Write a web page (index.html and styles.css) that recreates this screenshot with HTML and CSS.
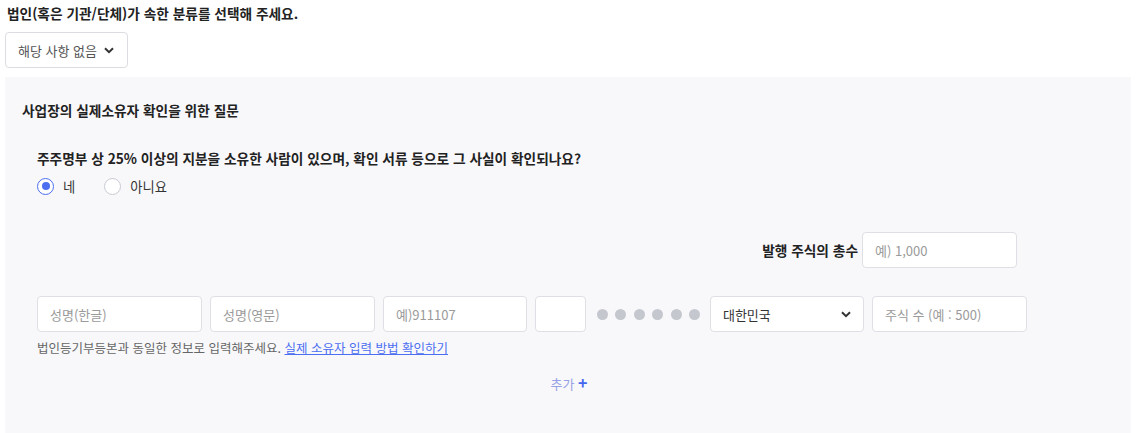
FILE: index.html
```html
<!DOCTYPE html>
<html lang="ko">
<head>
<meta charset="utf-8">
<link rel="stylesheet" href="styles.css">
</head>
<body>
<div class="page">
  <div class="page-title">법인(혹은 기관/단체)가 속한 분류를 선택해 주세요.</div>
  <button class="dropdown">해당 사항 없음
    <svg class="chev" width="10" height="7" viewBox="0 0 10 7"><path d="M1 1.2 L5 5.2 L9 1.2" fill="none" stroke="#333" stroke-width="2"/></svg>
  </button>
  <section class="panel">
    <div class="section-title">사업장의 실제소유자 확인을 위한 질문</div>
    <div class="question-block">
      <div class="question">주주명부 상 25% 이상의 지분을 소유한 사람이 있으며, 확인 서류 등으로 그 사실이 확인되나요?</div>
      <div class="radios">
        <label class="radio"><span class="circle checked"></span>네</label>
        <label class="radio"><span class="circle"></span>아니요</label>
      </div>
      <div class="total-row">
        <span class="total-label">발행 주식의 총수</span>
        <div class="field w-total"><span class="ph">예) 1,000</span></div>
      </div>
      <div class="owner-row">
        <div class="field w-name"><span class="ph">성명(한글)</span></div>
        <div class="field w-name"><span class="ph">성명(영문)</span></div>
        <div class="field w-birth"><span class="ph">예)911107</span></div>
        <div class="field w-digit"></div>
        <div class="dots"><i></i><i></i><i></i><i></i><i></i><i></i></div>
        <div class="field w-country"><span class="val">대한민국</span>
          <svg class="chev" width="10" height="7" viewBox="0 0 10 7"><path d="M1 1.2 L5 5.2 L9 1.2" fill="none" stroke="#333" stroke-width="2"/></svg>
        </div>
        <div class="field w-shares"><span class="ph">주식 수 (예 : 500)</span></div>
      </div>
      <div class="helper">법인등기부등본과 동일한 정보로 입력해주세요. <a href="#" class="link">실제 소유자 입력 방법 확인하기</a></div>
      <div class="add-row"><span class="add">추가 <span class="plus">+</span></span></div>
    </div>
  </section>
</div>
</body>
</html>
```

FILE: styles.css
```css
* { box-sizing: border-box; }
html, body { margin: 0; padding: 0; background: #ffffff; }
body {
  font-family: "Noto Sans CJK KR", "Noto Sans", sans-serif;
  color: #222;
}
.page { padding: 3px 14px 0 5px; }
.page-title {
  font-size: 13.7px;
  font-weight: 700;
  line-height: 20px;
  padding-left: 2px;
  color: #222;
}
.dropdown {
  margin-top: 9px;
  height: 36px;
  width: 123px;
  display: flex;
  align-items: center;
  justify-content: space-between;
  padding: 0 13px 0 12px;
  border: 1px solid #dcdde2;
  border-radius: 4px;
  background: #fff;
  font-family: inherit;
  font-size: 13px;
  color: #555;
}
.panel {
  margin-top: 9px;
  background: #f8f8fb;
  padding: 23px 0 40px 17px;
  min-height: 360px;
}
.section-title {
  font-size: 13.7px;
  font-weight: 700;
  line-height: 20px;
}
.question-block { padding-left: 15px; margin-top: 28px; }
.question { font-size: 13.7px; font-weight: 700; line-height: 20px; }
.radios { display: flex; margin-top: 8px; height: 20px; align-items: center; }
.radio {
  display: flex; align-items: center;
  font-size: 13.3px; color: #333;
  margin-right: 29px;
}
.circle {
  width: 17px; height: 17px;
  border-radius: 50%;
  border: 1px solid #c9cbd3;
  background: #fff;
  margin-right: 9px;
  position: relative;
}
.circle.checked { border-color: #4c6ef0; }
.circle.checked::after {
  content: "";
  position: absolute;
  left: 3.5px; top: 3.5px;
  width: 8px; height: 8px;
  border-radius: 50%;
  background: #4c6ef0;
}
.total-row {
  margin-top: 36px;
  display: flex;
  justify-content: flex-end;
  align-items: center;
  gap: 4px;
  width: 980px;
}
.total-label { font-size: 13.7px; font-weight: 700; }
.field {
  height: 36px;
  background: #fff;
  border: 1px solid #dfe0e5;
  border-radius: 4px;
  display: flex;
  align-items: center;
  padding: 0 12px;
  font-size: 13px;
}
.ph { color: #9a9a9a; }
.val { color: #333; flex: 1; }
.w-total { width: 155px; }
.owner-row {
  margin-top: 28px;
  display: flex;
  align-items: center;
  gap: 8px;
}
.w-name { width: 165px; }
.w-birth { width: 144px; }
.w-digit { width: 51px; }
.w-country { width: 154px; justify-content: space-between; padding-right: 12px; }
.w-shares { width: 155px; }
.dots { display: flex; gap: 7.4px; margin: 0 2px 0 3px; }
.dots i {
  display: block;
  width: 11px; height: 11px;
  border-radius: 50%;
  background: #c5c7cf;
}
.helper {
  margin-top: 7px;
  font-size: 12.5px;
  line-height: 18px;
  color: #666;
}
.link { color: #4c6ef0; text-decoration: underline; }
.add-row { margin-top: 15px; width: 1064px; display: flex; justify-content: center; line-height: 20px; }
.add { font-size: 13px; color: #97a2e4; }
.plus { color: #4466ee; font-weight: 700; font-size: 16px; }
```
